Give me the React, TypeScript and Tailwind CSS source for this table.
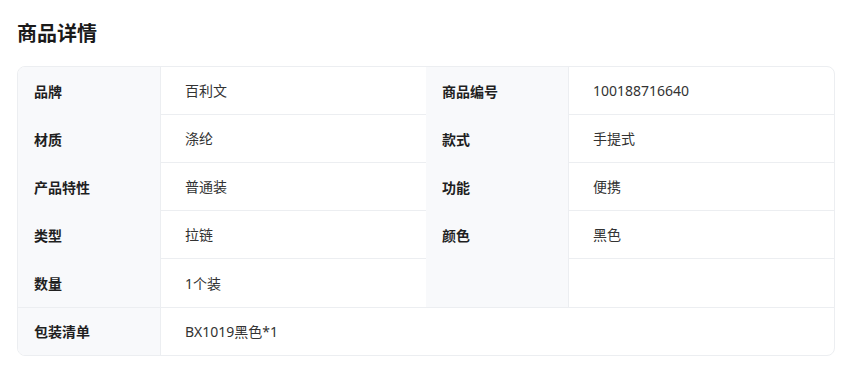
import React from 'react';

type Pair = { label: string; value: string };

const left: Pair[] = [
    { label: '品牌', value: '百利文' },
    { label: '材质', value: '涤纶' },
    { label: '产品特性', value: '普通装' },
    { label: '类型', value: '拉链' },
    { label: '数量', value: '1个装' },
];

const right: Pair[] = [
    { label: '商品编号', value: '100188716640' },
    { label: '款式', value: '手提式' },
    { label: '功能', value: '便携' },
    { label: '颜色', value: '黑色' },
    { label: '', value: '' },
];

const Row: React.FC<{ item: Pair; last: boolean }> = ({ item, last }) => (
    <div className="flex h-12">
        <div className="w-[143px] shrink-0 bg-[#f8f9fb] border-r border-[#eceef1] pl-4 flex items-center text-[14px] font-bold text-[#1f1f1f]">
            {item.label}
        </div>
        <div
            className={
                last
                    ? 'flex-1 pl-6 flex items-center text-[14px] text-[#333333]'
                    : 'flex-1 pl-6 flex items-center text-[14px] text-[#333333] border-b border-[#eceef1]'
            }
        >
            {item.value}
        </div>
    </div>
);

export default function App() {
    return (
        <div
            className="bg-white min-h-screen pl-[17px] pr-[7px] pt-5"
            style={{ fontFamily: '"Noto Sans", "Noto Sans CJK SC", sans-serif' }}
        >
            <h2 className="text-[20px] leading-7 font-bold text-[#1a1a1a] mb-[18px]">商品详情</h2>

            <div className="border border-[#eceef1] rounded-lg overflow-hidden">
                <div className="flex">
                    <div className="flex-1 flex flex-col">
                        {left.map((p, i) => (
                            <Row key={p.label} item={p} last={i === left.length - 1} />
                        ))}
                    </div>
                    <div className="flex-1 flex flex-col">
                        {right.map((p, i) => (
                            <Row key={i} item={p} last={i === right.length - 1} />
                        ))}
                    </div>
                </div>
                <div className="flex h-12 border-t border-[#eceef1]">
                    <div className="w-[143px] shrink-0 bg-[#f8f9fb] border-r border-[#eceef1] pl-4 flex items-center text-[14px] font-bold text-[#1f1f1f]">
                        包装清单
                    </div>
                    <div className="flex-1 pl-6 flex items-center text-[14px] text-[#333333]">BX1019黑色*1</div>
                </div>
            </div>
        </div>
    );
}
